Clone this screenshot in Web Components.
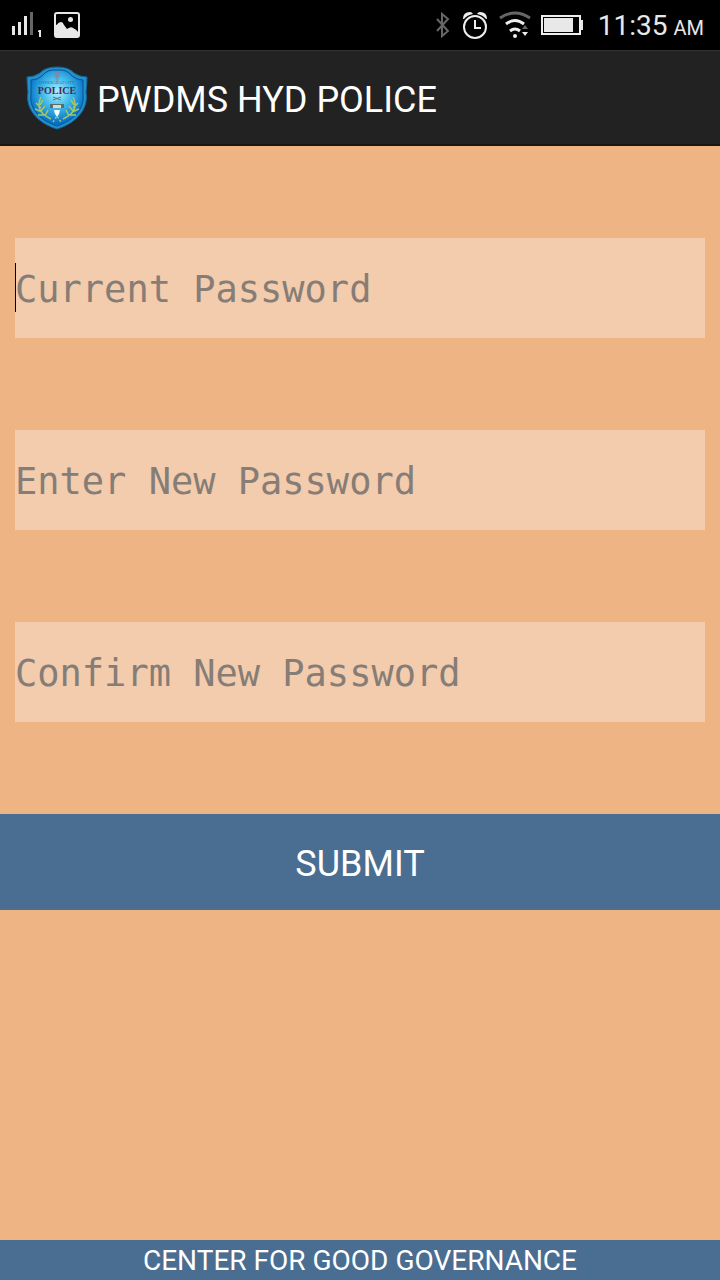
<!DOCTYPE html>
<html lang="en">
<head>
<meta charset="utf-8">
<meta name="viewport" content="width=device-width, initial-scale=1">
<title>PWDMS HYD POLICE</title>
<style>
  html, body { margin: 0; height: 100%; }
  body { font-family: Roboto, "Liberation Sans", sans-serif; background: #eeb484; }
</style>
</head>
<body>
<password-screen></password-screen>

<script>
class BaseElement extends HTMLElement {
  constructor() {
    super();
    this.attachShadow({ mode: "open" }).innerHTML = this.constructor.markup;
  }
}

class StatusBar extends BaseElement {
  static markup = `
    <style>
      :host { display: flex; align-items: center; justify-content: space-between; height: 50px; padding: 0 16px 0 12px; background: #000; color: #e8e8e8; box-sizing: border-box; }
      .group { display: flex; align-items: center; }
      svg { display: block; }
      .left { gap: 12px; }
      .right { gap: 10px; }
      .clock { display: flex; align-items: baseline; gap: 6px; margin-left: 5px; font-size: 28px; line-height: 36px; padding-top: 4px; }
      small { font-size: 20px; }
    </style>
    <div class="group left">
      <svg width="30" height="30" viewBox="0 0 30 30" aria-hidden="true">
        <path fill="#e8e8e8" d="M0 16h3v9H0zM6 12h3v13H6zM12 6h3v19h-3z"/>
        <path fill="#666" d="M18 2h3v23h-3z"/>
        <path fill="#e8e8e8" d="M27 20h2v7h-2v-5h-1v-1z"/>
      </svg>
      <svg width="26" height="26" viewBox="0 0 26 26" aria-hidden="true">
        <rect x="1" y="1" width="24" height="24" rx="2" fill="#000" stroke="#e8e8e8" stroke-width="2"/>
        <circle cx="16.500" cy="7.500" r="2.500" fill="#e8e8e8"/>
        <path fill="#e8e8e8" d="M1 25V13C3 14 4 10 7 10Q9 10 10 13L13 17Q17 14 19 16Q22 17 25 21V25z"/>
      </svg>
    </div>
    <div class="group right">
      <svg width="16" height="28" viewBox="0 0 16 28" fill="none" stroke="#666" stroke-width="2" aria-hidden="true">
        <path d="M2 8l11 12-6 5V3l6 5L2 20"/>
      </svg>
      <svg width="28" height="30" viewBox="0 0 28 30" fill="none" stroke="#eee" stroke-width="2" aria-hidden="true">
        <circle cx="14" cy="17" r="11"/>
        <path d="M14 10v8h6"/>
        <path fill="#eee" stroke="none" d="M2 9Q2 2 9 2Q11 2 12 4Q6 5 3 9zM26 9Q26 2 19 2Q17 2 16 4Q22 5 25 9z"/>
      </svg>
      <svg width="32" height="28" viewBox="0 0 32 28" fill="none" stroke-width="3" aria-hidden="true">
        <path stroke="#666" d="M1 7Q16-3 31 7"/>
        <path stroke="#eee" d="M7 13q9-7 18 0M11 20q5-4 10 0"/>
        <circle cx="16" cy="25" r="2" fill="#eee"/>
        <path fill="#666" d="M23 18l3-4 3 4z"/>
        <path fill="#eee" d="M23 21h6l-3 4z"/>
      </svg>
      <svg width="42" height="22" viewBox="0 0 42 22" aria-hidden="true">
        <rect x="1" y="2" width="38" height="18" fill="none" stroke="#eee" stroke-width="2"/>
        <path fill="#e8e8e8" d="M3 4h29v14H3zM40 6h2v10h-2z"/>
      </svg>
      <div class="clock"><span>11:35</span><small>AM</small></div>
    </div>`;
}

class PoliceBadge extends BaseElement {
  static markup = `
    <style>
      :host { display: block; width: 62px; height: 64px; }
      svg { display: block; width: 100%; height: 100%; }
      text { font-family: "Liberation Serif", serif; text-anchor: middle; }
    </style>
    <svg viewBox="0 0 62 64" role="img" aria-label="Hyderabad City Police">
      <defs>
        <radialGradient id="face" cx=".5" cy=".4" r=".55">
          <stop offset="0" stop-color="#b4edfb"/>
          <stop offset=".45" stop-color="#47c1ee"/>
          <stop offset="1" stop-color="#056fc4"/>
        </radialGradient>
      </defs>
      <path fill="#2291c9" stroke="#12649a" d="M31 1Q43 1 48 7Q54 11 61 11Q61 18 60 26C63 42 51 57 31 63C11 57-1 42 2 26Q1 18 1 11Q8 11 14 7Q19 1 31 1z"/>
      <path fill="url(#face)" stroke="#075399" d="M31 4Q41 3 46 10Q51 14 57 14V29C59 43 47 55 31 60C15 55 3 43 5 29V14Q11 14 16 10Q21 3 31 4z"/>
      <g fill="none" stroke="#9a7f92">
        <circle cx="31" cy="8" r="2"/>
        <path d="M28 11h6M29 14h4M31 6v8"/>
        <path d="M27 31l8 3M35 31l-8 3" stroke="#557486"/>
      </g>
      <text x="31" y="18" font-size="4" fill="#466585">HYDERABAD CITY</text>
      <text x="31" y="28" font-size="10" font-weight="bold" fill="#502751">POLICE</text>
      <g fill="none" stroke="#a5c866" stroke-width="1.500">
        <path d="M15 31Q8 45 25 53M10 37l5 5M17 34l-3 5M9 43l7 3M19 40l-4 5M12 49l8 0M22 44l-3 6"/>
        <path d="M47 31Q54 45 37 53M52 37l-5 5M45 34l3 5M53 43l-7 3M43 40l4 5M50 49l-8 0M40 44l3 6"/>
        <path stroke-dasharray="2 2" d="M27 56l4-6 4 6"/>
      </g>
      <path fill="#5b6b70" d="M24 38h14v4H24z"/>
      <path fill="#d8dfba" d="M27 39h8v3h-8z"/>
      <path fill="#f3ffff" d="M28 44h6l-1 4-2 3-2-3z"/>
    </svg>`;
}

class AppBar extends BaseElement {
  static markup = `
    <style>
      :host { display: flex; align-items: center; gap: 9px; height: 96px; padding: 0 26px; box-sizing: border-box; background: #222; border-top: 1px solid #333; border-bottom: 2px solid #1d160f; color: #fff; }
      h1 { margin: 0; padding-top: 4px; font-size: 36px; line-height: 44px; font-weight: 400; }
    </style>
    <police-badge></police-badge>
    <h1><slot></slot></h1>`;
}

class PasswordField extends BaseElement {
  static markup = `
    <style>
      :host { display: block; position: relative; height: 100px; background: #f3cbad; }
      input { display: block; width: 100%; height: 100%; box-sizing: border-box; margin: 0; padding: 2px 0 0; border: 0; border-radius: 0; outline: 0; background: transparent; color: #222; font: 37px "DejaVu Sans Mono", monospace; }
      input::placeholder { color: #857d76; opacity: 1; }
      .caret { display: none; position: absolute; left: 0; top: 25px; width: 1px; height: 49px; background: #000; }
      :host([active]) .caret { display: block; }
      :host([active]) input { caret-color: transparent; }
    </style>
    <input type="password">
    <span class="caret"></span>`;
  connectedCallback() {
    const input = this.shadowRoot.querySelector("input");
    const label = this.getAttribute("label");
    input.placeholder = label;
    input.setAttribute("aria-label", label);
    input.addEventListener("input", () => this.removeAttribute("active"));
  }
}

class SubmitButton extends BaseElement {
  static markup = `
    <style>
      :host { display: block; }
      button { display: block; width: 100%; height: 96px; margin: 0; padding: 4px 0 0; border: 0; background: #4a6d92; color: #fff; font: inherit; font-size: 36px; line-height: 44px; cursor: pointer; }
    </style>
    <button type="button"><slot></slot></button>`;
}

class AppFooter extends BaseElement {
  static markup = `
    <style>
      :host { display: block; padding: 3px 0 1px; background: #4a6d92; color: #fff; font-size: 28px; line-height: 36px; text-align: center; }
    </style>
    <slot></slot>`;
}

class PasswordScreen extends BaseElement {
  static markup = `
    <style>
      :host { display: flex; flex-direction: column; min-height: 100vh; background: #eeb484; }
      main { flex: 1; }
      .fields { display: grid; gap: 92px; padding: 92px 15px; }
    </style>
    <status-bar></status-bar>
    <app-bar>PWDMS HYD POLICE</app-bar>
    <main>
      <form>
        <div class="fields">
          <password-field label="Current Password" active></password-field>
          <password-field label="Enter New Password"></password-field>
          <password-field label="Confirm New Password"></password-field>
        </div>
        <submit-button>SUBMIT</submit-button>
      </form>
    </main>
    <app-footer>CENTER FOR GOOD GOVERNANCE</app-footer>`;
}

customElements.define("status-bar", StatusBar);
customElements.define("police-badge", PoliceBadge);
customElements.define("app-bar", AppBar);
customElements.define("password-field", PasswordField);
customElements.define("submit-button", SubmitButton);
customElements.define("app-footer", AppFooter);
customElements.define("password-screen", PasswordScreen);
</script>
</body>
</html>
